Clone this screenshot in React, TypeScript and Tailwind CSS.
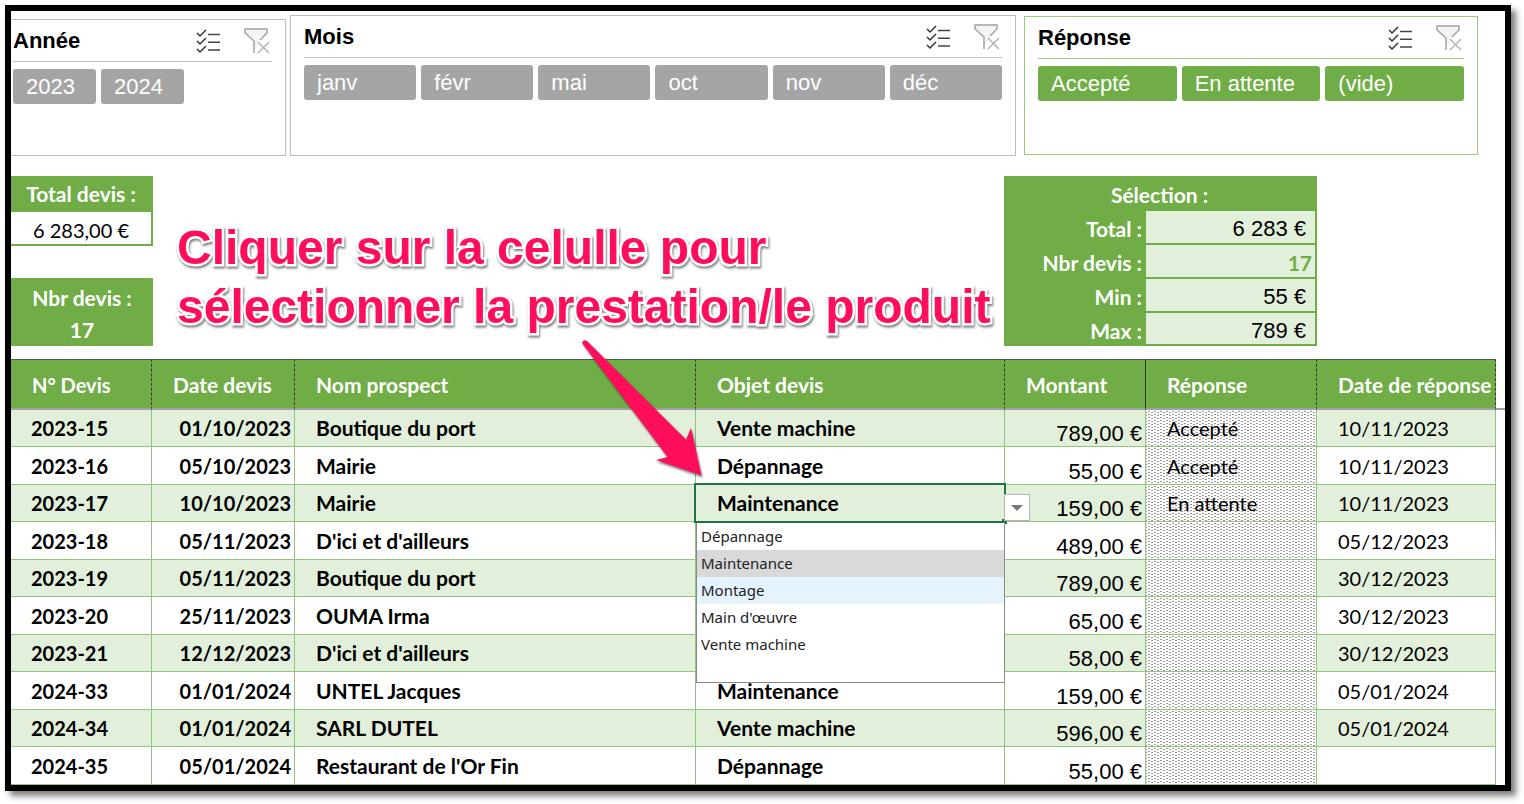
import { useState } from "react";
import clsx from "clsx";

type Quote = {
  id: string;
  date: string;
  client: string;
  item: string;
  amount: string;
  status: string;
  answered: string;
};

const QUOTES: Quote[] = [
  { id: "2023-15", date: "01/10/2023", client: "Boutique du port", item: "Vente machine", amount: "789,00 €", status: "Accepté", answered: "10/11/2023" },
  { id: "2023-16", date: "05/10/2023", client: "Mairie", item: "Dépannage", amount: "55,00 €", status: "Accepté", answered: "10/11/2023" },
  { id: "2023-17", date: "10/10/2023", client: "Mairie", item: "Maintenance", amount: "159,00 €", status: "En attente", answered: "10/11/2023" },
  { id: "2023-18", date: "05/11/2023", client: "D'ici et d'ailleurs", item: "", amount: "489,00 €", status: "", answered: "05/12/2023" },
  { id: "2023-19", date: "05/11/2023", client: "Boutique du port", item: "", amount: "789,00 €", status: "", answered: "30/12/2023" },
  { id: "2023-20", date: "25/11/2023", client: "OUMA Irma", item: "", amount: "65,00 €", status: "", answered: "30/12/2023" },
  { id: "2023-21", date: "12/12/2023", client: "D'ici et d'ailleurs", item: "", amount: "58,00 €", status: "", answered: "30/12/2023" },
  { id: "2024-33", date: "01/01/2024", client: "UNTEL Jacques", item: "Maintenance", amount: "159,00 €", status: "", answered: "05/01/2024" },
  { id: "2024-34", date: "01/01/2024", client: "SARL DUTEL", item: "Vente machine", amount: "596,00 €", status: "", answered: "05/01/2024" },
  { id: "2024-35", date: "05/01/2024", client: "Restaurant de l'Or Fin", item: "Dépannage", amount: "55,00 €", status: "", answered: "" },
];

const ITEMS = ["Dépannage", "Maintenance", "Montage", "Main d'œuvre", "Vente machine"];

const SELECTION = [
  { label: "Total :", value: "6 283 €" },
  { label: "Nbr devis :", value: "17", count: true },
  { label: "Min :", value: "55 €" },
  { label: "Max :", value: "789 €" },
];

function ChecklistIcon() {
  return (
    <svg width="24" height="26" viewBox="0 0 24 26" fill="none" stroke="#333" strokeWidth="1.5">
      <path d="M1 5l3 3 6-6M1 13l3 3 6-6M1 21l3 3 6-6" />
      <path d="M12 6.500h12M12 14.300h12M12 22h12" stroke="#444" />
    </svg>
  );
}

function ClearFilterIcon() {
  return (
    <svg width="26" height="26" viewBox="0 0 26 26" fill="none" stroke="#a3a3a3" strokeWidth="1.5">
      <path d="M1 1h22v4l-8 8v3l-3 4-2 4V13L1 5z" fill="#f4f4f4" stroke="none" />
      <path d="M10 25V13L1 5V1h22v4l-7 7" />
      <path d="M14 14l11 11M25 14L14 25" stroke="#b5b5b5" />
    </svg>
  );
}

type SlicerProps = {
  title: string;
  values: string[];
  green?: boolean;
  className: string;
  listClassName: string;
};

function Slicer({ title, values, green, className, listClassName }: SlicerProps) {
  return (
    <section className={clsx("border", green ? "border-[#9acb7c]" : "border-[#bdbdbd]", className)}>
      <header className={clsx("flex h-[42px] items-center border-b", green ? "border-[#9acb7c]" : "border-[#bdbdbd]")}>
        <h2 className="flex-1 text-[22px] leading-6 font-bold">{title}</h2>
        <button type="button" aria-label={`Sélection multiple ${title}`} className="mr-6">
          <ChecklistIcon />
        </button>
        <button type="button" aria-label={`Effacer le filtre ${title}`} className="mr-[2px]">
          <ClearFilterIcon />
        </button>
      </header>
      <div className={clsx("mt-[7px] grid gap-x-[5px]", listClassName)}>
        {values.map((v) => (
          <button
            key={v}
            type="button"
            className={clsx(
              "h-[35px] rounded-[3px] pl-[13px] text-left text-[22px] leading-6 text-white",
              green ? "bg-[#70ad47]" : "bg-[#a5a5a5]",
            )}
          >
            {v}
          </button>
        ))}
      </div>
    </section>
  );
}

function ItemPicker() {
  const [value, setValue] = useState("Maintenance");
  const [open, setOpen] = useState(true);

  return (
    <>
      <select
        aria-label="Objet devis"
        value={value}
        onChange={(e) => setValue(e.target.value)}
        className="block w-full appearance-none bg-transparent font-bold outline-none"
      >
        {ITEMS.map((item) => (
          <option key={item}>{item}</option>
        ))}
      </select>
      <span className="pointer-events-none absolute -inset-x-[2px] -top-[2px] -bottom-[2px] border-2 border-[#217346]" />
      <span className="absolute -right-[3px] -bottom-[3px] size-[5px] bg-[#217346]" />
      <button
        type="button"
        aria-label="Ouvrir la liste"
        onClick={() => setOpen(!open)}
        className="absolute top-[9px] left-full z-10 flex h-[27px] w-[26px] items-center justify-center border border-[#b5b5b5] bg-white"
      >
        <svg width="12" height="6" viewBox="0 0 12 6" fill="#777">
          <path d="M0 0h12L6 6z" />
        </svg>
      </button>
      {open && (
        <ul
          role="listbox"
          aria-label="Prestations"
          className="absolute top-full -right-px left-0 z-10 mt-[2px] h-[160px] border border-t-0 border-[#8a8a8a] bg-white font-['Noto_Sans',sans-serif] text-[15px] leading-[27px] font-normal text-[#222]"
        >
          {ITEMS.map((item) => (
            <li
              key={item}
              role="option"
              aria-selected={item === value}
              onClick={() => setValue(item)}
              className={clsx("pl-1", item === value && "bg-[#d9d9d9]", item === "Montage" && "bg-[#e5f3ff]")}
            >
              {item}
            </li>
          ))}
        </ul>
      )}
    </>
  );
}

const TH = "border-t border-b-2 border-t-[#555] border-b-[#a0a0a0] border-r border-r-[#2b3d20] bg-[#70ad47] pt-[2px] pl-[21px] text-left";
const TH_DASHED = "[border-right-style:dashed]";
const TD = "border-r border-b border-[#92c47d]";
const HATCH =
  "bg-white bg-[radial-gradient(#999_1px,transparent_1px),radial-gradient(#999_1px,transparent_1px)] bg-size-[6px_3px] bg-position-[0_0,3px_1px]";

export default function App() {
  return (
    <div className="bg-white pt-[5px] pr-[13px] pb-[13px] pl-[5px] font-['Liberation_Sans',Arial,sans-serif] text-black">
      <main className="relative overflow-hidden border-[6px] border-black bg-white shadow-[5px_5px_6px_rgba(0,0,0,0.5)]">
        <div className="grid grid-cols-[275fr_726fr_458fr] items-end gap-1 pt-1 pr-[27px]">
          <Slicer
            title="Année"
            values={["2023", "2024"]}
            className="h-[137px] border-l-0 pr-[13px] pl-[2px]"
            listClassName="grid-cols-3"
          />
          <Slicer
            title="Mois"
            values={["janv", "févr", "mai", "oct", "nov", "déc"]}
            className="h-[141px] px-[13px]"
            listClassName="grid-cols-6"
          />
          <Slicer
            title="Réponse"
            values={["Accepté", "En attente", "(vide)"]}
            green
            className="mb-px ml-1 h-[139px] px-[13px]"
            listClassName="grid-cols-3"
          />
        </div>

        <div className="flex items-start pt-5 pr-[188px] font-['Lato',sans-serif] text-[21px]">
          <div className="w-[142px] shrink-0 text-center">
            <div className="border-r-2 border-b-2 border-[#70ad47]">
              <div className="bg-[#70ad47] leading-9 font-bold text-white">Total devis :</div>
              <div className="h-8 text-[20px] leading-9">6 283,00 €</div>
            </div>
            <div className="mt-8 h-[68px] bg-[#70ad47] pt-1 leading-8 font-bold text-white">
              <div>Nbr devis :</div>
              <div>17</div>
            </div>
          </div>

          <p className="mt-[42px] ml-6 font-['Liberation_Sans',Arial,sans-serif] text-[48px] leading-[59px] font-bold whitespace-nowrap text-[#ff0f5b] drop-shadow-[1px_2px_1px_rgba(0,0,0,0.5)] [-webkit-text-stroke:5px_white] [paint-order:stroke_fill]">
            Cliquer sur la celulle pour
            <br />
            sélectionner la prestation/le produit
          </p>

          <table className="ml-auto w-[313px] shrink-0 border-separate border-spacing-0 border-r-2 border-[#70ad47] bg-[#70ad47]">
            <thead>
              <tr>
                <th colSpan={2} className="h-[35px] p-0 pt-[2px] leading-6 text-white">Sélection :</th>
              </tr>
            </thead>
            <tbody>
              {SELECTION.map((s) => (
                <tr key={s.label} className="h-[34px] last:h-[33px]">
                  <th className="w-[142px] p-0 pt-[2px] pr-1 text-right leading-6 text-white">{s.label}</th>
                  <td
                    className={clsx(
                      "border-b-2 border-[#70ad47] bg-[#e2efda] p-0 pt-1 text-right leading-6",
                      s.count
                        ? "pr-[3px] font-bold text-[#70ad47]"
                        : "pr-[9px] font-['Liberation_Sans',Arial,sans-serif] text-[22px]",
                    )}
                  >
                    {s.value}
                  </td>
                </tr>
              ))}
            </tbody>
          </table>
        </div>

        <table className="mt-[13px] w-full table-fixed border-separate border-spacing-0 font-['Lato',sans-serif] text-[20px] leading-6">
          <colgroup>
            <col className="w-[141px]" />
            <col className="w-[143px]" />
            <col />
            <col className="w-[309px]" />
            <col className="w-[141px]" />
            <col className="w-[171px]" />
            <col className="w-[179px]" />
            <col className="w-[9px]" />
          </colgroup>
          <thead>
            <tr className="h-[51px] text-[21px] whitespace-nowrap text-white">
              <th className={clsx(TH, TH_DASHED, "text-[20px]")}>N° Devis</th>
              <th className={clsx(TH, TH_DASHED)}>Date devis</th>
              <th className={clsx(TH, TH_DASHED)}>Nom prospect</th>
              <th className={clsx(TH, TH_DASHED)}>Objet devis</th>
              <th className={TH}>Montant</th>
              <th className={clsx(TH, TH_DASHED)}>Réponse</th>
              <th className={clsx(TH, TH_DASHED)}>Date de réponse</th>
              <td className="border-b-2 border-[#a0a0a0]" />
            </tr>
          </thead>
          <tbody>
            {QUOTES.map((q, i) => (
              <tr key={q.id} className="h-[37px] odd:bg-[#e2efda] even:h-[38px]">
                <td className={clsx(TD, "pl-5 font-bold")}>{q.id}</td>
                <td className={clsx(TD, "pr-[3px] text-right font-bold")}>{q.date}</td>
                <td className={clsx(TD, "pl-[21px] text-[21px] font-bold")}>{q.client}</td>
                <td className={clsx(TD, "relative pl-[21px] text-[21px] font-bold")}>
                  {i === 2 ? <ItemPicker /> : q.item}
                </td>
                <td className={clsx(TD, "pt-3 pr-[3px] text-right font-['Liberation_Sans',Arial,sans-serif] text-[22px]")}>
                  {q.amount}
                </td>
                <td className={clsx(TD, HATCH, "pl-[21px]")}>{q.status}</td>
                <td className={clsx(TD, "pl-[21px]")}>{q.answered}</td>
                <td className="bg-white" />
              </tr>
            ))}
          </tbody>
        </table>

        <svg
          className="pointer-events-none absolute top-[325px] left-[567px] z-20 drop-shadow-[1px_2px_1px_rgba(0,0,0,0.5)]"
          width="130"
          height="145"
          viewBox="0 0 130 145"
          fill="#ff0f5b"
        >
          <path d="M4 7Q5 3 9 5L108 103.500 113 92 123.500 139.500 78 124 89.500 121Z" />
        </svg>
      </main>
    </div>
  );
}
